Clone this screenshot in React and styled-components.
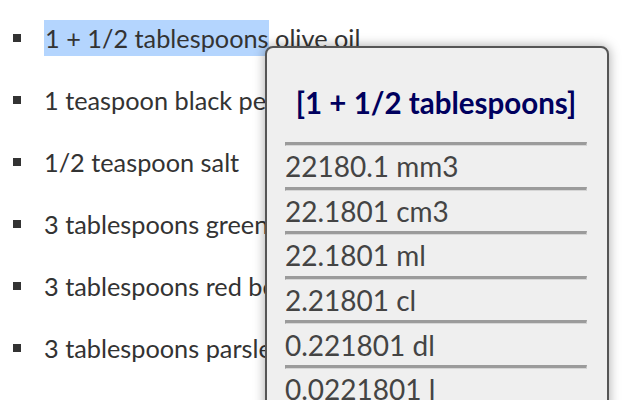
import styled, { createGlobalStyle } from "styled-components";

const GlobalStyle = createGlobalStyle`
  html, body {
    margin: 0;
    padding: 0;
    background: #fff;
  }
  body {
    font-family: Lato, "Open Sans", sans-serif;
    overflow: hidden;
  }
`;

const ingredients = [
  { id: 1, amount: "1 + 1/2 tablespoons", rest: " olive oil", selected: true },
  { id: 2, amount: "1 teaspoon black pepper", rest: "" },
  { id: 3, amount: "1/2 teaspoon salt", rest: "" },
  { id: 4, amount: "3 tablespoons green onion", rest: "" },
  { id: 5, amount: "3 tablespoons red bell pepper", rest: "" },
  { id: 6, amount: "3 tablespoons parsley", rest: "" },
];

const conversions = [
  "22180.1 mm3",
  "22.1801 cm3",
  "22.1801 ml",
  "2.21801 cl",
  "0.221801 dl",
  "0.0221801 l",
];

export default function App() {
  return (
    <Page>
      <GlobalStyle />
      <IngredientList>
        {ingredients.map((item) => (
          <Ingredient key={item.id}>
            <Bullet />
            <IngredientText>
              {item.selected ? (
                <>
                  <Selection>{item.amount}</Selection>
                  {item.rest}
                </>
              ) : (
                item.amount + item.rest
              )}
            </IngredientText>
          </Ingredient>
        ))}
      </IngredientList>

      <Popup>
        <PopupTitle>[1 + 1/2 tablespoons]</PopupTitle>
        <ConversionList>
          {conversions.map((value) => (
            <ConversionRow key={value}>
              <Separator />
              <ConversionValue>{value}</ConversionValue>
            </ConversionRow>
          ))}
        </ConversionList>
      </Popup>
    </Page>
  );
}

const Page = styled.div`
  position: relative;
  width: 640px;
  height: 400px;
  overflow: hidden;
`;

const IngredientList = styled.ul`
  list-style: none;
  margin: 0;
  padding: 20px 0 0 0;
  display: flex;
  flex-direction: column;
  gap: 26px;
`;

const Ingredient = styled.li`
  display: flex;
  align-items: center;
  height: 36px;
`;

const Bullet = styled.span`
  flex: none;
  width: 8px;
  height: 8px;
  margin: 0 23px 0 13px;
  background: #333;
`;

const IngredientText = styled.span`
  font-size: 25.3px;
  line-height: 36px;
  color: #333;
  white-space: pre;
`;

const Selection = styled.span`
  display: inline-block;
  height: 36px;
  padding-left: 1px;
  background: #b4d5fe;
`;

const Popup = styled.div`
  position: absolute;
  left: 265px;
  top: 46px;
  width: 344px;
  height: 400px;
  box-sizing: border-box;
  padding: 0 20px 0 18px;
  background: #efefef;
  border: 2px solid #555;
  border-radius: 8px;
  box-shadow: 0 0 12px rgba(0, 0, 0, 0.35);
`;

const PopupTitle = styled.div`
  padding-top: 38px;
  height: 56px;
  font-size: 29.5px;
  font-weight: 700;
  line-height: 34px;
  text-align: center;
  color: #00005e;
  white-space: nowrap;
`;

const ConversionList = styled.div`
  display: flex;
  flex-direction: column;
`;

const ConversionRow = styled.div`
  display: flex;
  flex-direction: column;
  height: 44.6px;
`;

const Separator = styled.div`
  flex: none;
  height: 0;
  border-style: solid;
  border-width: 3px 1px 1px 1px;
  border-color: #9b9b9b #cfcfcf #d6d6d6 #9b9b9b;
`;

const ConversionValue = styled.div`
  flex: 1;
  display: flex;
  align-items: center;
  font-size: 28px;
  color: #444;
  white-space: nowrap;
`;
